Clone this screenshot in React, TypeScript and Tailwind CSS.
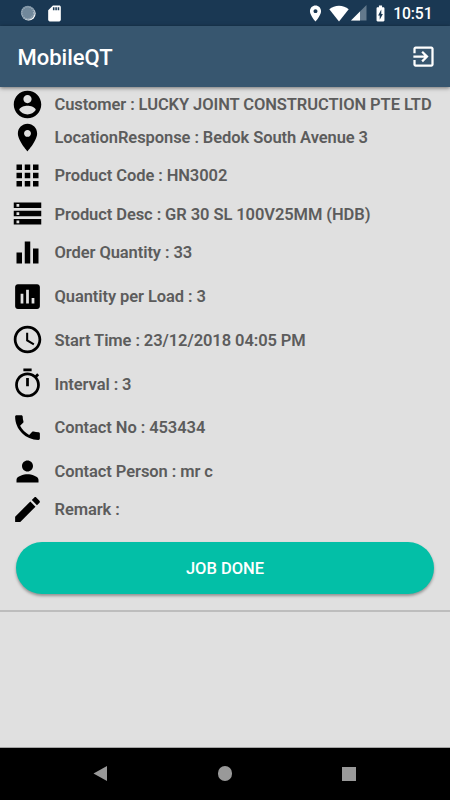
import React from 'react';

const icons = {
  account:
    'M12 2C6.48 2 2 6.48 2 12s4.48 10 10 10 10-4.48 10-10S17.52 2 12 2zm0 3c1.66 0 3 1.34 3 3s-1.34 3-3 3-3-1.34-3-3 1.34-3 3-3zm0 14.2c-2.5 0-4.71-1.28-6-3.22.03-1.99 4-3.08 6-3.08 1.99 0 5.97 1.09 6 3.08-1.29 1.94-3.5 3.22-6 3.22z',
  place:
    'M12 2C8.13 2 5 5.13 5 9c0 5.25 7 13 7 13s7-7.75 7-13c0-3.87-3.13-7-7-7zm0 9.5c-1.38 0-2.5-1.12-2.5-2.5s1.12-2.5 2.5-2.5 2.5 1.12 2.5 2.5-1.12 2.5-2.5 2.5z',
  apps: 'M4 8h4V4H4v4zm6 12h4v-4h-4v4zm-6 0h4v-4H4v4zm0-6h4v-4H4v4zm6 0h4v-4h-4v4zm6-10v4h4V4h-4zm-6 4h4V4h-4v4zm6 6h4v-4h-4v4zm0 6h4v-4h-4v4z',
  storage: 'M2 20h20v-4H2v4zm2-3h2v2H4v-2zM2 4v4h20V4H2zm4 3H4V5h2v2zm-4 7h20v-4H2v4zm2-3h2v2H4v-2z',
  bars: 'M4 12h4v8H4zM10 4h4v16h-4zM16 9h4v11h-4z',
  assessment:
    'M19 3H5c-1.1 0-2 .9-2 2v14c0 1.1.9 2 2 2h14c1.1 0 2-.9 2-2V5c0-1.1-.9-2-2-2zM9 17H7v-7h2v7zm4 0h-2V7h2v10zm4 0h-2v-4h2v4z',
  clock:
    'M11.99 2C6.47 2 2 6.48 2 12s4.47 10 9.99 10C17.52 22 22 17.52 22 12S17.52 2 11.99 2zM12 20c-4.42 0-8-3.58-8-8s3.58-8 8-8 8 3.58 8 8-3.58 8-8 8zm.5-13H11v6l5.25 3.15.75-1.23-4.5-2.67z',
  timer:
    'M15 1H9v2h6V1zm-4 13h2V8h-2v6zm8.03-6.61l1.42-1.42c-.43-.51-.9-.99-1.41-1.41l-1.42 1.42C16.07 4.74 14.12 4 12 4c-4.97 0-9 4.03-9 9s4.02 9 9 9 9-4.03 9-9c0-2.12-.74-4.07-1.97-5.61zM12 20c-3.87 0-7-3.13-7-7s3.13-7 7-7 7 3.13 7 7-3.13 7-7 7z',
  phone:
    'M6.62 10.79c1.44 2.83 3.76 5.14 6.59 6.59l2.2-2.2c.27-.27.67-.36 1.02-.24 1.12.37 2.33.57 3.57.57.55 0 1 .45 1 1V20c0 .55-.45 1-1 1-9.39 0-17-7.61-17-17 0-.55.45-1 1-1h3.5c.55 0 1 .45 1 1 0 1.25.2 2.45.57 3.57.11.35.03.74-.25 1.02l-2.2 2.2z',
  person:
    'M12 12c2.21 0 4-1.79 4-4s-1.79-4-4-4-4 1.79-4 4 1.79 4 4 4zm0 2c-2.67 0-8 1.34-8 4v2h16v-2c0-2.66-5.33-4-8-4z',
  edit: 'M3 17.25V21h3.75L17.81 9.94l-3.75-3.75L3 17.25zM20.71 7.04c.39-.39.39-1.02 0-1.41l-2.34-2.34c-.39-.39-1.02-.39-1.41 0l-1.83 1.83 3.75 3.75 1.83-1.83z',
  exit: 'M10.09 15.59L11.5 17l5-5-5-5-1.41 1.41L12.67 11H3v2h9.67l-2.58 2.59zM19 3H5c-1.11 0-2 .9-2 2v4h2V5h14v14H5v-4H3v4c0 1.1.89 2 2 2h14c1.1 0 2-.9 2-2V5c0-1.1-.9-2-2-2z',
  sdCard: 'M18 2h-8L4.02 8 4 20c0 1.1.9 2 2 2h12c1.1 0 2-.9 2-2V4c0-1.1-.9-2-2-2zm-6 6h-2V4h2v4zm3 0h-2V4h2v4zm3 0h-2V4h2v4z',
  battery:
    'M15.67 4H14V2h-4v2H8.33C7.6 4 7 4.6 7 5.33v15.33C7 21.4 7.6 22 8.33 22h7.33c.74 0 1.34-.6 1.34-1.33V5.33C17 4.6 16.4 4 15.67 4zM11 20v-5.5H9L13 7v5.5h2L11 20z',
};

const rows: { icon: keyof typeof icons; text: string; gap: string }[] = [
  { icon: 'account', text: 'Customer : LUCKY JOINT CONSTRUCTION PTE LTD', gap: '' },
  { icon: 'place', text: 'LocationResponse : Bedok South Avenue 3', gap: '' },
  { icon: 'apps', text: 'Product Code : HN3002', gap: 'mt-[5px]' },
  { icon: 'storage', text: 'Product Desc : GR 30 SL 100V25MM (HDB)', gap: 'mt-[5.5px]' },
  { icon: 'bars', text: 'Order Quantity : 33', gap: 'mt-[5.5px]' },
  { icon: 'assessment', text: 'Quantity per Load : 3', gap: 'mt-[11px]' },
  { icon: 'clock', text: 'Start Time : 23/12/2018 04:05 PM', gap: 'mt-[10.5px]' },
  { icon: 'timer', text: 'Interval : 3', gap: 'mt-[11px]' },
  { icon: 'phone', text: 'Contact No : 453434', gap: 'mt-[10.5px]' },
  { icon: 'person', text: 'Contact Person : mr c', gap: 'mt-[11px]' },
  { icon: 'edit', text: 'Remark :', gap: 'mt-[5px]' },
];

const Icon = ({ name, className }: { name: keyof typeof icons; className: string }) => (
  <svg viewBox="0 0 24 24" fill="currentColor" className={`shrink-0 ${className}`}>
    <path d={icons[name]} />
  </svg>
);

const StatusBar = () => (
  <div className="flex h-[26px] items-center justify-between bg-[#1a3853] pl-5 pr-[17.5px] text-white">
    <div className="flex items-center gap-[9px]">
      <svg viewBox="0 0 16 16" className="h-4 w-4">
        <circle cx="8.6" cy="8.6" r="7" fill="#fff" />
        <circle cx="7.8" cy="7.8" r="7" fill="#71889b" />
        <circle cx="7.8" cy="7.8" r="6" fill="none" stroke="#a9b7c3" strokeWidth="1.3" strokeDasharray="1 1.1" />
      </svg>
      <Icon name="sdCard" className="h-[19px] w-[19px]" />
    </div>
    <div className="flex items-center">
      <Icon name="place" className="h-[19px] w-[19px]" />
      <svg viewBox="0 0 20 17" fill="currentColor" className="ml-[4px] h-[17px] w-[20px]">
        <path d="M10 16.5L.3 4.2C3 2 6.300 .7 10 .7s7 1.300 9.700 3.500z" />
      </svg>
      <svg viewBox="0 0 16 16" className="ml-[2px] h-4 w-4">
        <path d="M15.500 0v15.500H0z" fill="#63798c" />
        <path d="M9 6.500v9H0z" fill="#fff" />
      </svg>
      <Icon name="battery" className="ml-[4px] h-[19px] w-[19px]" />
      <span className="ml-[3px] pt-[2px] text-[15.7px] font-medium leading-none tracking-[-0.1px]">10:51</span>
    </div>
  </div>
);

const Header = () => (
  <header className="relative flex h-[61px] items-center justify-between bg-[#37566f] pl-[17.5px] pr-[13px] text-white shadow-[0_1px_4px_rgba(0,0,0,0.5)]">
    <h1 className="pt-[2px] text-[22px] font-medium leading-none">MobileQT</h1>
    <Icon name="exit" className="h-[27px] w-[27px]" />
  </header>
);

const NavBar = () => (
  <nav className="flex h-[52px] items-center justify-between bg-black pb-[1px] pl-[93px] pr-[94px] text-[#999]">
    <svg viewBox="0 0 15 15" fill="currentColor" className="h-[15px] w-[15px]">
      <path d="M14 0v15L.5 7.500z" />
    </svg>
    <div className="h-[14.5px] w-[14.5px] rounded-full bg-[#999]" />
    <div className="h-[14px] w-[14px] bg-[#999]" />
  </nav>
);

const App = () => {
  return (
    <div className="flex h-[800px] w-[450px] flex-col overflow-hidden bg-[#e0e0e0] font-[Roboto,sans-serif]">
      <StatusBar />
      <Header />
      <main className="flex-1 border-b border-[#a3a3a3]">
        <div className="h-[525px] border-b-2 border-[#bdbdbd] pt-[0.5px]">
          {rows.map((row) => (
            <div key={row.icon} className={`flex h-[33px] items-center pl-[11px] ${row.gap}`}>
              <Icon name={row.icon} className="h-[33px] w-[33px] text-black" />
              <span className="ml-[10.5px] whitespace-nowrap pt-[2.5px] text-[16.5px] font-semibold leading-none tracking-[-0.08px] text-[#5c5c5c]">{row.text}</span>
            </div>
          ))}
          <button className="ml-4 mt-[16.5px] flex h-[52px] w-[418px] items-center justify-center rounded-full bg-[#03bfa7] pt-[2px] text-[16.5px] font-medium text-white shadow-[0_2px_3px_rgba(0,0,0,0.35)]">
            JOB DONE
          </button>
        </div>
      </main>
      <NavBar />
    </div>
  );
};

export default App;
